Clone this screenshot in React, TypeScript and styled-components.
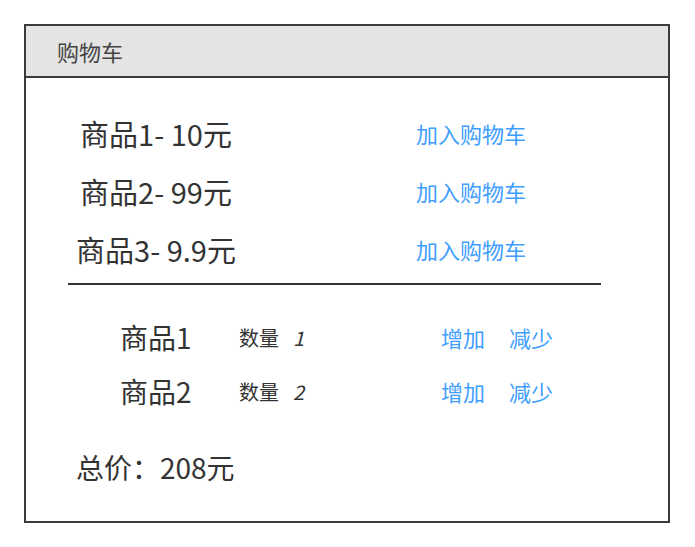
import React from 'react'
import styled, { createGlobalStyle } from 'styled-components'

const GlobalStyle = createGlobalStyle`
    body {
        margin: 0;
        background: #fff;
        font-family: 'Noto Sans CJK SC', 'Noto Sans', sans-serif;
        color: #333;
    }
`

const Panel = styled.div`
    box-sizing: border-box;
    width: 646px;
    height: 499px;
    margin: 24px 0 0 24px;
    border: 2px solid #3a3a3a;
    display: flex;
    flex-direction: column;
`

const Header = styled.div`
    height: 50px;
    background: #e4e4e4;
    border-bottom: 2px solid #3a3a3a;
    display: flex;
    align-items: center;
    padding-left: 31px;
    font-size: 22px;
    color: #444;
`

const Body = styled.div`
    padding: 26px 0 0 42px;
`

const ProductGrid = styled.div`
    display: grid;
    grid-template-columns: 176px 157px 140px;
    grid-auto-rows: 58px;
    align-items: center;
`

const ProductName = styled.div`
    font-size: 29px;
    text-align: center;
`

const Link = styled.a`
    color: #409eff;
    font-size: 22px;
    cursor: pointer;
    text-align: center;
`

const Divider = styled.hr`
    width: 533px;
    margin: 5px 0 0 0;
    border: 0;
    border-top: 2px solid #333;
`

const CartList = styled.div`
    padding: 25px 0 0 52px;
    display: flex;
    flex-direction: column;
`

const CartRow = styled.div`
    display: flex;
    align-items: center;
    height: 54px;
`

const CartName = styled.div`
    width: 119px;
    font-size: 28px;
`

const QtyLabel = styled.div`
    width: 202px;
    font-size: 20px;
    display: flex;
    gap: 14px;
`

const QtyValue = styled.span`
    font-style: italic;
`

const Actions = styled.div`
    display: flex;
    gap: 24px;
`

const Total = styled.div`
    margin: 29px 0 0 8px;
    font-size: 28px;
`

const products = [
    { name: '商品1- 10元' },
    { name: '商品2- 99元' },
    { name: '商品3- 9.9元' },
]

const cart = [
    { name: '商品1', qty: 1 },
    { name: '商品2', qty: 2 },
]

const App: React.FC = () => {
    return (
        <>
            <GlobalStyle />
            <Panel>
                <Header>购物车</Header>
                <Body>
                    <ProductGrid>
                        {products.map((p) => (
                            <React.Fragment key={p.name}>
                                <ProductName>{p.name}</ProductName>
                                <span />
                                <Link>加入购物车</Link>
                            </React.Fragment>
                        ))}
                    </ProductGrid>
                    <Divider />
                    <CartList>
                        {cart.map((c) => (
                            <CartRow key={c.name}>
                                <CartName>{c.name}</CartName>
                                <QtyLabel>
                                    数量 <QtyValue>{c.qty}</QtyValue>
                                </QtyLabel>
                                <Actions>
                                    <Link>增加</Link>
                                    <Link>减少</Link>
                                </Actions>
                            </CartRow>
                        ))}
                    </CartList>
                    <Total>总价：208元</Total>
                </Body>
            </Panel>
        </>
    )
}

export default App
